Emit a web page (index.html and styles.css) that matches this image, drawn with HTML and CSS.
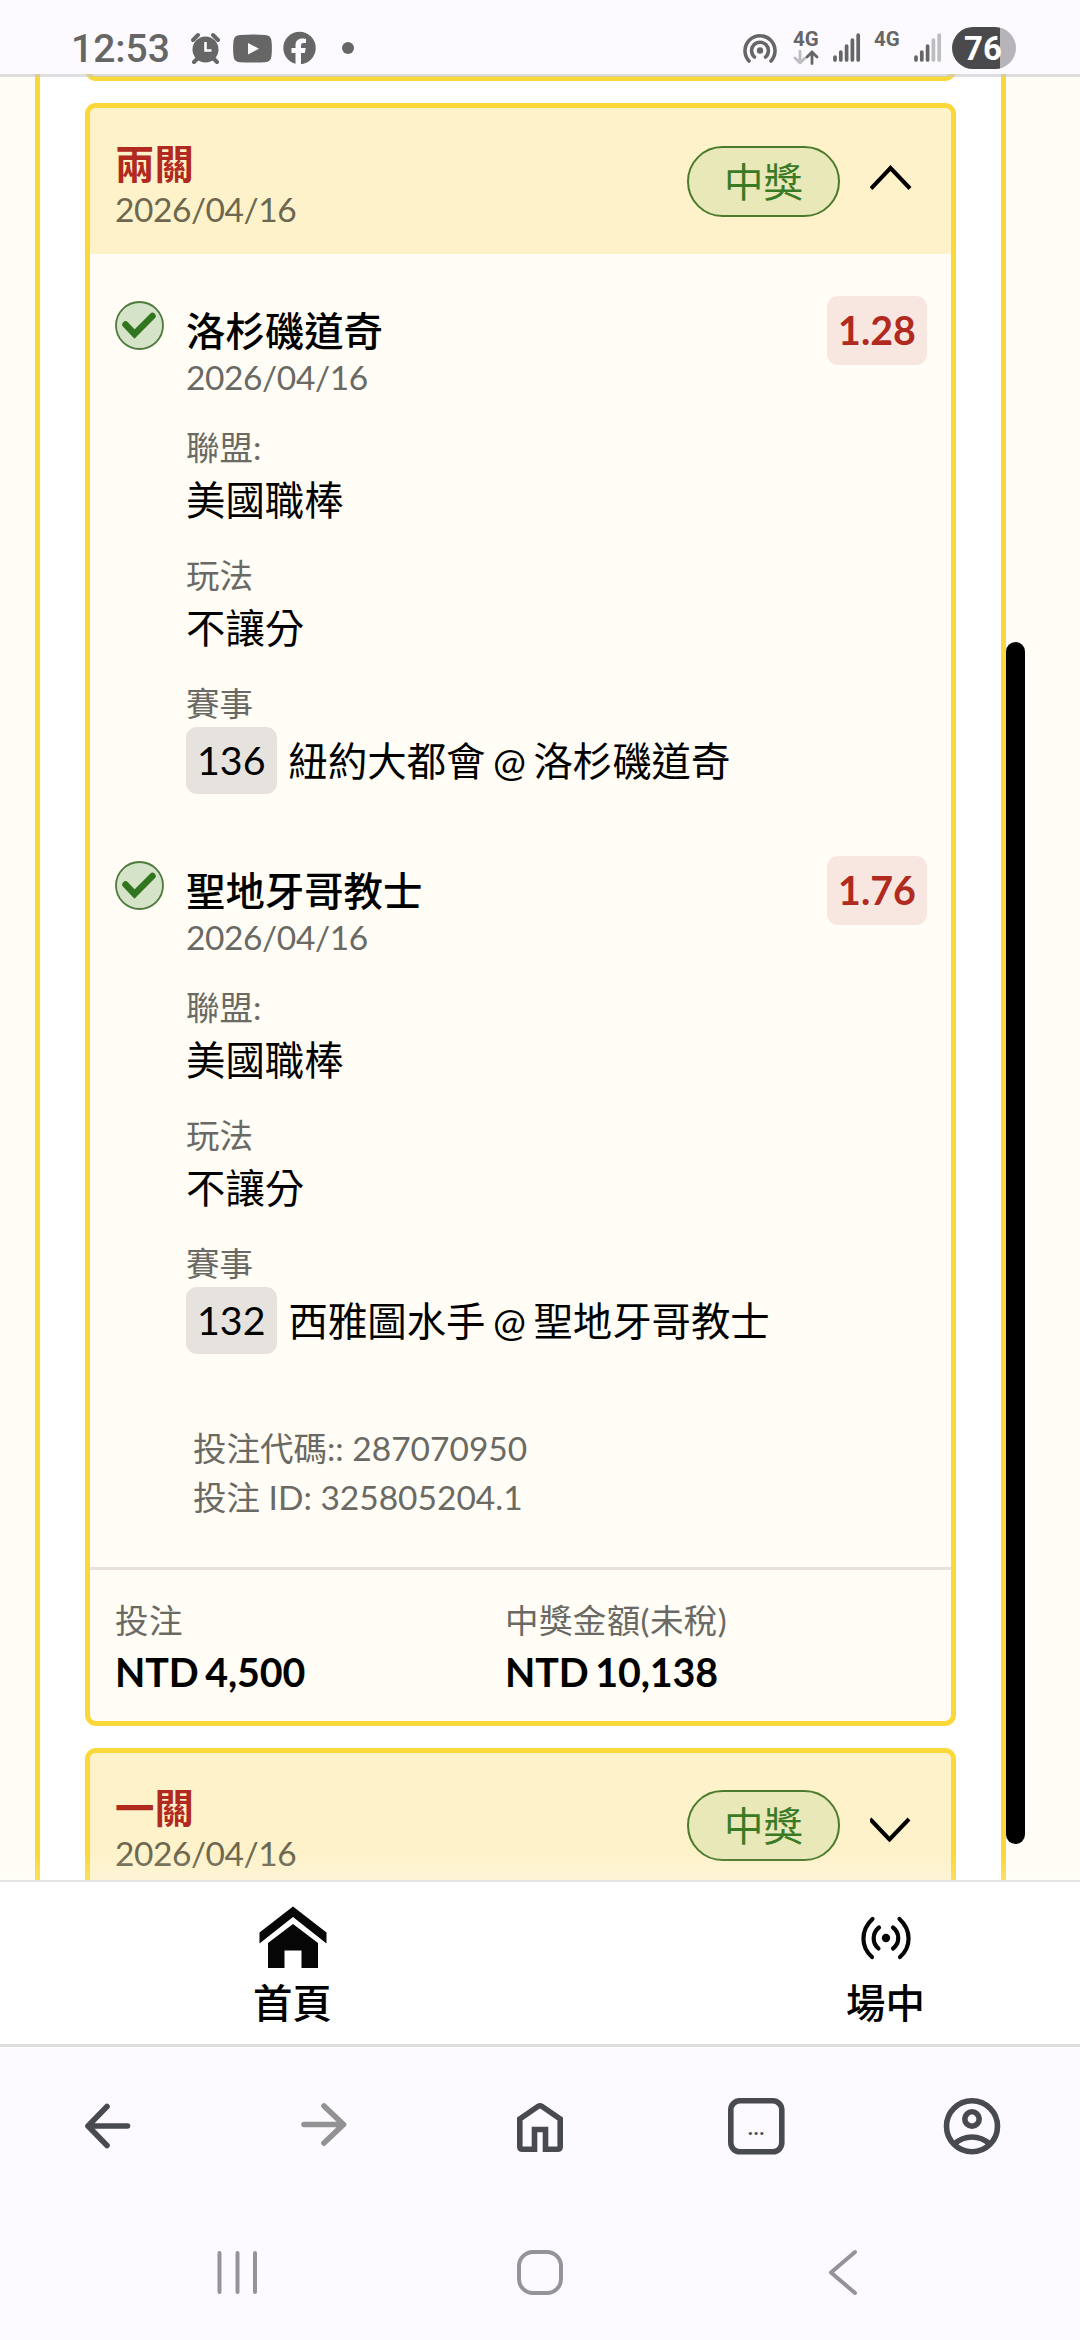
FILE: index.html
```html
<!DOCTYPE html>
<html lang="zh-Hant">
<head>
<meta charset="utf-8">
<title>投注紀錄</title>
<link rel="stylesheet" href="styles.css">
</head>
<body>
<div class="screen">
  <header class="status">
    <span class="clock">12:53</span>
    <svg class="alarm" width="30" height="74" viewBox="191 0 30 74">
      <circle cx="205.500" cy="49.500" r="13" fill="#666"/>
      <path d="M193 40l5-5M218 40l-5-5M197 59l-3 3M214 59l3 3" stroke="#666" stroke-width="4" stroke-linecap="round"/>
      <path d="M205.500 42v8.500h6" fill="none" stroke="#fcfaff" stroke-width="2.600"/>
    </svg>
    <svg class="youtube" width="40" height="74" viewBox="233 0 40 74">
      <path d="M240 35Q252.500 34 265 35Q271 35 271.500 41Q272.300 48.500 271.500 56Q271 62 265 62.200Q252.500 63 240 62.200Q234 62 233.500 56Q232.700 48.500 233.500 41Q234 35 240 35Z" fill="#666"/>
      <path d="M248 43v11.500l11-5.800z" fill="#fcfaff"/>
    </svg>
    <svg class="facebook" width="33" height="74" viewBox="283 0 33 74">
      <circle cx="299.500" cy="48" r="16.200" fill="#666"/>
      <path d="M295.500 65V53h-4v-5h4v-2.500c0-5 3-7 6.800-7 1.800 0 3.700.3 3.700.3v4.300h-2.400c-2 0-2.600 1.200-2.600 2.700V48h4.700l-.8 5h-3.900v12z" fill="#fcfaff"/>
    </svg>
    <svg class="more" width="12" height="74" viewBox="342 0 12 74"><circle cx="348" cy="48" r="6" fill="#666"/></svg>

    <svg class="hotspot" width="36" height="74" viewBox="743 0 36 74">
      <g fill="none" stroke="#666" stroke-width="3.600" stroke-linecap="round">
        <path d="M750 61a15 15 0 1 1 22 0"/>
        <path d="M755.500 57a8.400 8.400 0 1 1 11 0"/>
      </g>
      <circle cx="761" cy="50.500" r="3.200" fill="#666"/>
    </svg>
    <span class="net">
      <span class="net-label">4G</span>
      <svg width="26" height="15" viewBox="0 0 26 15" fill="none" stroke-width="2.800" stroke-linecap="round" stroke-linejoin="round">
        <path d="M7 1v11M2 8l5 5 5-5" stroke="#bdbcc0"/>
        <path d="M19 13.500V2M14 7l5-5 5 5" stroke="#666"/>
      </svg>
    </span>
    <svg class="signal" width="28" height="74" viewBox="0 0 28 74" stroke="#666" stroke-width="3.700" stroke-linecap="round">
      <path d="M2 57v3M7.800 52v8M13.600 46v14M19.400 40v20M25.200 35v25"/>
    </svg>
    <span class="net net-second"><span class="net-label">4G</span></span>
    <svg class="signal" width="28" height="74" viewBox="0 0 28 74" stroke="#666" stroke-width="3.700" stroke-linecap="round">
      <path d="M2 57v3M7.800 52v8M13.600 46v14"/><path d="M19.400 40v20M25.200 35v25" stroke="#bdbcc0"/>
    </svg>
    <span class="battery">76</span>
  </header>

  <main class="page">
    <section class="panel">
      <article class="card card-prev"></article>

      <article class="card">
        <div class="card-head">
          <div class="card-title"><h2>兩關</h2><time>2026/04/16</time></div>
          <span class="badge">中獎</span>
          <svg class="chevron" width="43" height="32" viewBox="0 0 43 32"><path d="M1 23.500L20.500 3L40 23.500" fill="none" stroke="#000" stroke-width="4"/></svg>
        </div>
        <div class="card-body">
          <section class="leg">
            <svg class="check" width="49" height="49" viewBox="0 0 49 49"><circle cx="24.500" cy="24.500" r="23.500" fill="#d5e3c8" stroke="#4c7a3d" stroke-width="1.800"/><path d="M10.500 23.500L19.500 33L37.500 15" fill="none" stroke="#31751f" stroke-width="6.500" stroke-linecap="round"/></svg>
            <div class="leg-main">
              <h3>洛杉磯道奇</h3>
              <time>2026/04/16</time>
              <dl>
                <div><dt>聯盟:</dt><dd>美國職棒</dd></div>
                <div><dt>玩法</dt><dd>不讓分</dd></div>
                <div><dt>賽事</dt><dd class="match"><span class="code">136</span><span>紐約大都會 @ 洛杉磯道奇</span></dd></div>
              </dl>
            </div>
            <span class="odds">1.28</span>
          </section>
          <section class="leg">
            <svg class="check" width="49" height="49" viewBox="0 0 49 49"><circle cx="24.500" cy="24.500" r="23.500" fill="#d5e3c8" stroke="#4c7a3d" stroke-width="1.800"/><path d="M10.500 23.500L19.500 33L37.500 15" fill="none" stroke="#31751f" stroke-width="6.500" stroke-linecap="round"/></svg>
            <div class="leg-main">
              <h3>聖地牙哥教士</h3>
              <time>2026/04/16</time>
              <dl>
                <div><dt>聯盟:</dt><dd>美國職棒</dd></div>
                <div><dt>玩法</dt><dd>不讓分</dd></div>
                <div><dt>賽事</dt><dd class="match"><span class="code">132</span><span>西雅圖水手 @ 聖地牙哥教士</span></dd></div>
              </dl>
            </div>
            <span class="odds">1.76</span>
          </section>
          <div class="bet-info"><p>投注代碼:: 287070950</p><p>投注 ID: 325805204.1</p></div>
        </div>
        <div class="card-foot">
          <div><span class="foot-label">投注</span><strong>NTD 4,500</strong></div>
          <div><span class="foot-label">中獎金額(未稅)</span><strong>NTD 10,138</strong></div>
        </div>
      </article>

      <article class="card">
        <div class="card-head">
          <div class="card-title"><h2>一關</h2><time>2026/04/16</time></div>
          <span class="badge">中獎</span>
          <svg class="chevron" width="43" height="32" viewBox="0 0 43 32"><path d="M0 9L19.500 29.500L39 9" fill="none" stroke="#000" stroke-width="4"/></svg>
        </div>
      </article>
    </section>
    <div class="top-line"></div>
    <div class="fade"></div>
    <div class="scrollbar"></div>
  </main>

  <nav class="site-tabs">
    <a class="site-tab">
      <svg width="68" height="62" viewBox="0 0 68 62" fill="#060606"><path d="M34 .5L67.500 26.500V37.500L34 11L.5 37.500V26.500Z"/><path d="M34 18L59 37V62H42.500V44.500H25.500V62H9V37Z"/></svg>
      <span>首頁</span>
    </a>
    <a class="site-tab">
      <svg width="68" height="62" viewBox="0 0 68 62" fill="none" stroke="#060606" stroke-width="4.200" stroke-linecap="round"><path d="M20.500 13C8.500 24 8.500 41 20 51M47.500 13C59.500 24 59.500 41 48 51"/><path d="M27 21.500C20 27 20 37 26.500 42.500M41 21.500C48 27 48 37 41 42.500"/><circle cx="34" cy="32" r="4.200" fill="#060606" stroke="none"/></svg>
      <span>場中</span>
    </a>
  </nav>

  <nav class="browser-bar">
    <svg width="58" height="58" viewBox="0 0 58 58" fill="none" stroke="#484a4f" stroke-width="5.600" stroke-linecap="round" stroke-linejoin="round"><path d="M48.500 29H9M28 9.500L9 29L28 48.500"/></svg>
    <svg width="58" height="58" viewBox="0 0 58 58" fill="none" stroke="#929295" stroke-width="5.600" stroke-linecap="round" stroke-linejoin="round"><path d="M9 27.500H48.500M29 9L48.500 27.500L29 46"/></svg>
    <svg width="58" height="58" viewBox="0 0 58 58" fill="none" stroke="#484a4f" stroke-width="5.600"><path d="M23.500 55V32.500H34.500V52.200H46.500Q49.200 52.200 49.200 49.500V22L30.800 9.300Q29 8.200 27.200 9.300L8.800 22V49.500Q8.800 52.200 11.500 52.200H26.300M31.700 52.200H37"/></svg>
    <svg width="58" height="58" viewBox="0 0 58 58"><rect x="3.800" y="3.800" width="51" height="51" rx="9" fill="none" stroke="#484a4f" stroke-width="5.600"/><text x="29.200" y="38" text-anchor="middle" class="tab-dots">...</text></svg>
    <svg width="58" height="58" viewBox="0 0 58 58" fill="none" stroke="#484a4f" stroke-width="5.600"><circle cx="29" cy="29.200" r="25.500"/><circle cx="29" cy="22" r="7.200"/><path d="M11.500 47Q19 40 29 40T46.500 47"/></svg>
  </nav>

  <nav class="system-bar">
    <svg width="50" height="50" viewBox="0 0 50 50" stroke="#949397" stroke-width="4" stroke-linecap="round"><path d="M7.500 6V45M25.500 6V45M43 6V45"/></svg>
    <svg width="50" height="50" viewBox="0 0 50 50" fill="none" stroke="#949397" stroke-width="4"><rect x="4" y="5" width="42" height="41" rx="14"/></svg>
    <svg width="50" height="50" viewBox="0 0 50 50" fill="none" stroke="#949397" stroke-width="4" stroke-linecap="round" stroke-linejoin="round"><path d="M37 5L13 25.500L37 46"/></svg>
  </nav>
</div>
</body>
</html>
```
FILE: styles.css
```css
* { box-sizing: border-box; }
body, h2, h3, p, dl, dd { margin: 0; }
body {
  width: 1080px;
  height: 2340px;
  overflow: hidden;
  font-family: Lato, "Noto Sans CJK TC", sans-serif;
  font-size: 39.4px;
  color: #000;
}
svg { display: block; flex: none; }

.screen {
  display: flex;
  flex-direction: column;
  height: 2340px;
  background: #fcfaff;
}

/* Phone status bar */
.status {
  display: flex;
  height: 74px;
  padding: 0 64px 0 71px;
  font-family: Roboto, sans-serif;
  color: #666;
}
.clock {
  width: 120px;
  padding-top: 26px;
  font-size: 39px;
  font-weight: 500;
  line-height: 46px;
}
.youtube { margin-left: 12px; }
.facebook { margin-left: 10px; }
.more { margin-left: 26px; }
.hotspot { margin-left: auto; }
.net {
  display: flex;
  flex-direction: column;
  width: 26px;
  margin: 29px 14px 0 15px;
}
.net-second { margin-left: 13px; }
.net-label {
  height: 21px;
  font-size: 20.5px;
  font-weight: 700;
  line-height: 21px;
}
.battery {
  width: 64px;
  height: 42px;
  margin: 27px 0 0 10px;
  padding-left: 12px;
  border-radius: 21px;
  background: linear-gradient(90deg, #4a4a4c 48px, #b6b4b8 48px);
  color: #fff;
  font-size: 33px;
  font-weight: 700;
  line-height: 43px;
}

/* Scrolling page */
.page {
  position: relative;
  height: 1806px;
  overflow: hidden;
  background: #fffdf5;
}
.panel {
  display: flex;
  flex-direction: column;
  gap: 22px;
  width: 971px;
  height: 1900px;
  margin-left: 35px;
  padding: 0 45px;
  border: solid #fad839;
  border-width: 0 5px;
  background: #fff;
}
.top-line {
  position: absolute;
  inset: 0 0 auto;
  height: 3px;
  background: rgba(200, 200, 205, .6);
}
.fade {
  position: absolute;
  inset: auto 0 0;
  height: 26px;
  background: linear-gradient(rgba(255, 255, 255, 0), rgba(255, 255, 255, .2));
}
.scrollbar {
  position: absolute;
  top: 568px;
  right: 55px;
  width: 19px;
  height: 1202px;
  border-radius: 10px;
  background: #000;
}

/* Bet cards */
.card {
  flex: none;
  overflow: hidden;
  border: 5px solid #fad839;
  border-radius: 11px;
  background: #fffdf5;
}
.card-prev {
  height: 60px;
  margin-top: -53px;
}
.card-head {
  display: flex;
  align-items: center;
  height: 146px;
  padding: 0 38px 0 25px;
  background: #fef2cb;
}
.card-title {
  flex: 1;
  margin-top: 10px;
}
.card-title h2 {
  font-size: 39.4px;
  font-weight: 700;
  line-height: 45px;
  color: #b12a1f;
}
.card-title time {
  display: block;
  font-size: 33.5px;
  line-height: 46px;
  letter-spacing: -.45px;
  color: #6d674f;
}
.badge {
  width: 153px;
  height: 71px;
  border: 2px solid #4c7a2d;
  border-radius: 36px;
  background: #e9e8b9;
  color: #3b7a25;
  line-height: 68px;
  text-align: center;
}
.chevron { margin-left: 30px; }

.card-body { padding: 42px 24px 45px 25px; }
.leg {
  display: grid;
  grid-template-columns: 49px 1fr auto;
  column-gap: 22px;
  align-items: start;
  margin-bottom: 62px;
}
.check { margin-top: 5px; }
.leg-main { padding-top: 12px; }
.leg h3 {
  font-size: 39.4px;
  font-weight: 500;
  line-height: 46px;
}
.leg time {
  display: block;
  font-size: 33.5px;
  line-height: 47px;
  letter-spacing: -.4px;
  color: #6a6963;
}
.leg dl {
  display: flex;
  flex-direction: column;
  gap: 23px;
  margin-top: 24px;
}
dt, .foot-label {
  display: block;
  font-size: 33.5px;
  line-height: 45px;
  color: #6a6963;
}
.foot-label { letter-spacing: .4px; }
dd { line-height: 60px; }
.match {
  display: flex;
  gap: 12px;
  line-height: 68px;
  height: 67px;
  margin-top: 1px;
  white-space: nowrap;
  word-spacing: -2.6px;
}
.code {
  padding: 0 11px;
  border-radius: 11px;
  background: #e6e3de;
  line-height: 65px;
}
.odds {
  width: 100px;
  height: 69px;
  border-radius: 11px;
  background: #f8e7e0;
  color: #b12a1f;
  font-weight: 700;
  line-height: 68px;
  text-align: center;
}
.bet-info {
  margin-top: 69.5px;
  padding-left: 78px;
  font-size: 33.5px;
  line-height: 49px;
  color: #6a6963;
}
.leg:nth-of-type(2) { margin-bottom: 0; }

.card-foot {
  display: grid;
  grid-template-columns: 390px 1fr;
  padding: 28px 25px 21px;
  border-top: 3px solid #e6e3dc;
}
.card-foot strong {
  display: block;
  font-weight: 700;
  line-height: 57px;
  letter-spacing: -.15px;
  word-spacing: -2.6px;
}

/* Site tabs */
.site-tabs {
  display: flex;
  gap: 514px;
  height: 167px;
  padding: 24px 0 0 253px;
  border-top: 2px solid #e5e5e5;
  border-bottom: 3px solid #dedede;
  background: #fff;
}
.site-tab {
  display: flex;
  flex-direction: column;
  align-items: center;
  width: 79px;
  font-weight: 500;
}
.site-tab span {
  margin-top: 10px;
  line-height: 50px;
}

/* Browser toolbar and system navigation */
.browser-bar {
  display: grid;
  grid-template-columns: repeat(5, 1fr);
  place-items: center;
  height: 157px;
}
.tab-dots {
  font-family: Roboto, sans-serif;
  font-size: 20px;
  font-weight: 700;
  fill: #484a4f;
}
.system-bar {
  display: grid;
  grid-template-columns: repeat(3, 1fr);
  place-items: center;
  height: 136px;
  padding: 0 86px;
}
```
